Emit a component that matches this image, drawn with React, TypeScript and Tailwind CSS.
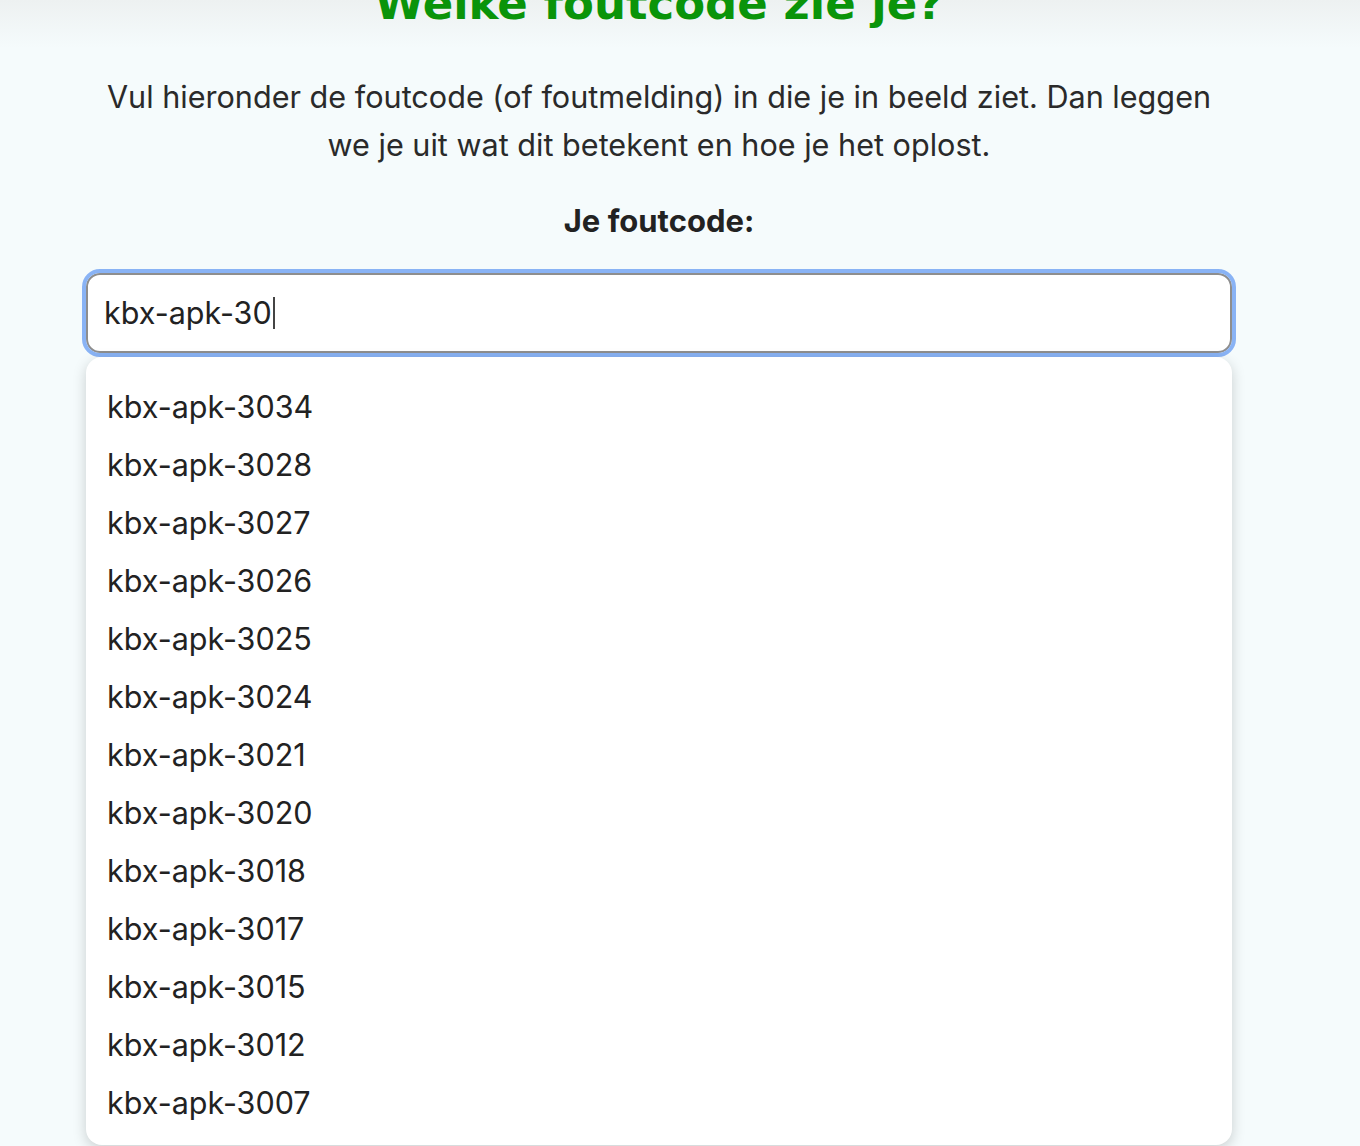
import React from "react";

const codes = [
  "kbx-apk-3034",
  "kbx-apk-3028",
  "kbx-apk-3027",
  "kbx-apk-3026",
  "kbx-apk-3025",
  "kbx-apk-3024",
  "kbx-apk-3021",
  "kbx-apk-3020",
  "kbx-apk-3018",
  "kbx-apk-3017",
  "kbx-apk-3015",
  "kbx-apk-3012",
  "kbx-apk-3007",
];

// zoekveld met suggesties
const CodeSearch = () => {
  return (
    <div className="relative">
      <div className="flex h-[80px] items-center rounded-[14px] border-2 border-[#8e8e8e] bg-white px-[16px] outline-4 outline-[#89b3f5]">
        <span className="text-[30.5px] text-[#222]">kbx-apk-30</span>
        <span className="ml-[1px] h-[32px] w-[2px] bg-[#444]" />
      </div>
      <ul className="absolute left-0 right-0 top-[84px] z-10 rounded-[16px] bg-white pb-[13px] pt-[21px] shadow-[0_4px_14px_rgba(0,0,0,0.18)]">
        {codes.map((c) => (
          <li key={c} className="pl-[21px] text-[30.5px] leading-[58px] text-[#222]">
            {c}
          </li>
        ))}
      </ul>
    </div>
  );
};

const App = () => {
  return (
    <div
      className="h-[1146px] overflow-hidden bg-[#f5fbfc]"
      style={{ fontFamily: "Inter, 'Noto Sans', sans-serif" }}
    >
      <div className="flex h-[48px] flex-col bg-gradient-to-b from-[#edf1f1] to-[#f5fbfc] pl-[86px] pr-[128px]">
        <h1
          className="mt-[-22px] text-center text-[45px] font-bold leading-[52px] text-[#0a940a]"
          style={{ fontFamily: "'DejaVu Sans', sans-serif" }}
        >
          Welke foutcode zie je?
        </h1>
      </div>
      <div className="pl-[86px] pr-[128px]">
        <p className="mx-auto mt-[25px] max-w-[1124px] text-center text-[30.6px] leading-[48px] text-[#2a2a2a]">
          Vul hieronder de foutcode (of foutmelding) in die je in beeld ziet. Dan leggen we je uit wat dit betekent en hoe je het oplost.
        </p>
        <p className="mt-[29px] text-center text-[31px] font-bold text-[#222]">Je foutcode:</p>
        <div className="mt-[28px]">
          <CodeSearch />
        </div>
      </div>
    </div>
  );
};

export default App;
